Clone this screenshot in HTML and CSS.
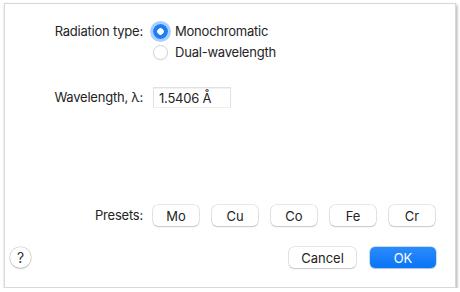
FILE: index.html
```html
<!DOCTYPE html>
<html lang="en">
<head>
    <meta charset="UTF-8">
    <title>Radiation</title>
    <link rel="stylesheet" href="styles.css">
</head>
<body>
    <div class="window">
        <div class="row row-radiation">
            <div class="label">Radiation type:</div>
            <div class="radios">
                <label class="radio checked"><span class="dot"></span>Monochromatic</label>
                <label class="radio"><span class="dot"></span>Dual-wavelength</label>
            </div>
        </div>
        <div class="row row-wave">
            <div class="label">Wavelength, λ:</div>
            <div class="field">1.5406 Å</div>
        </div>
        <div class="spacer"></div>
        <div class="row row-presets">
            <div class="label">Presets:</div>
            <div class="presets">
                <button class="btn">Mo</button>
                <button class="btn">Cu</button>
                <button class="btn">Co</button>
                <button class="btn">Fe</button>
                <button class="btn">Cr</button>
            </div>
        </div>
        <div class="footer">
            <button class="help">?</button>
            <div class="actions">
                <button class="btn wide">Cancel</button>
                <button class="btn ok primary">OK</button>
            </div>
        </div>
    </div>
</body>
</html>
```

FILE: styles.css
```css
html, body{
    margin: 0;
    background: #fff;
}
body{
    font-family: Inter, "Liberation Sans", sans-serif;
    font-size: 13px;
    letter-spacing: -0.22px;
    color: #242424;
}
.window{
    box-sizing: border-box;
    width: 452px;
    height: 285px;
    margin: 3px 0 0 4px;
    border: 1px solid #d8d8d8;
    box-shadow: 1px 2px 3px rgba(0,0,0,.35);
    background: #fff;
    display: flex;
    flex-direction: column;
}
.row{
    display: grid;
    grid-template-columns: 138px auto;
    column-gap: 10px;
    align-items: start;
}
.label{
    text-align: right;
    line-height: 21px;
}
.row-radiation{
    margin-top: 17px;
}
.radios{
    display: flex;
    flex-direction: column;
}
.radio{
    display: flex;
    align-items: center;
    gap: 7px;
    line-height: 21px;
    height: 21px;
}
.dot{
    box-sizing: border-box;
    width: 15px;
    height: 15px;
    border-radius: 50%;
    border: 1px solid #d4d4d4;
    background: #fff;
    box-shadow: 0 0.5px 1px rgba(0,0,0,.08);
}
.radio.checked .dot{
    border: none;
    background: radial-gradient(circle, #fff 0 3px, #1b7ff6 3.5px);
    box-shadow: 0 0 0 3px rgba(70,145,250,.45);
}
.row-wave{
    margin-top: 24px;
    align-items: center;
}
.field{
    box-sizing: border-box;
    width: 78px;
    height: 21px;
    line-height: 21px;
    padding-left: 5px;
    border: 1px solid #e2e2e2;
    border-bottom-color: #eee;
    box-shadow: inset 0 1px 0 #f2f2f2;
}
.spacer{
    flex: 1;
}
.row-presets{
    align-items: center;
}
.presets{
    display: flex;
    gap: 13px;
}
.btn{
    box-sizing: border-box;
    font: inherit;
    color: #242424;
    width: 46px;
    height: 21px;
    padding: 0;
    background: #fff;
    border: none;
    border-radius: 5px;
    box-shadow: 0 0 0 0.5px rgba(0,0,0,.18), 0 1px 1.5px rgba(0,0,0,.15);
}
.footer{
    display: flex;
    align-items: center;
    justify-content: space-between;
    margin: 21px 19px 19px 5px;
}
.help{
    box-sizing: border-box;
    width: 21px;
    height: 21px;
    padding: 0;
    border-radius: 50%;
    border: none;
    background: #fff;
    font: inherit;
    font-size: 14px;
    color: #333;
    box-shadow: 0 0 0 0.5px rgba(0,0,0,.2), 0 1px 1.5px rgba(0,0,0,.18);
}
.actions{
    display: flex;
    gap: 14px;
}
.btn.wide{
    width: 67px;
}
.btn.ok{
    width: 66px;
}
.btn.primary{
    color: #fff;
    background: linear-gradient(#2b8bfd, #0a74f5);
    box-shadow: 0 0 0 0.5px rgba(0,90,200,.4), 0 1px 1.5px rgba(0,0,0,.15);
}
```
